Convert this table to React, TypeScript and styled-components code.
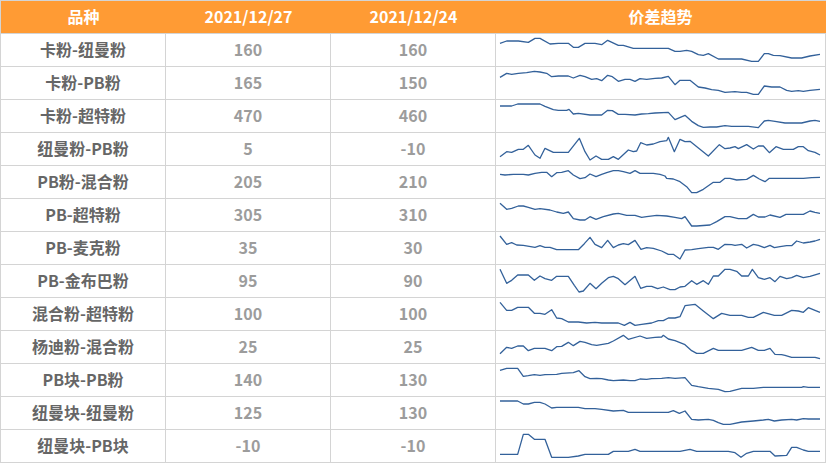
import React from 'react'
import styled, { createGlobalStyle } from 'styled-components'

const GlobalStyle = createGlobalStyle`
  html, body {
    margin: 0;
    padding: 0;
    background: #ffffff;
  }
  body {
    font-family: "Noto Sans CJK SC", "Noto Sans", sans-serif;
  }
`

// sparkline points were read off a 3x blow-up, so coords are in 1/3 px
// oy is the row line offset inside that blow-up
interface SparkData {
  oy: number
  ox?: number
  pts: number[]
}

interface Row {
  name: string
  cur: string
  prev: string
  trend: SparkData
}

const rows: Row[] = [
  {
    name: '卡粉-纽曼粉',
    cur: '160',
    prev: '160',
    trend: {
      oy: 0,
      pts: [
        15, 31, 35, 24, 70, 24, 100, 28, 120, 16, 135, 16, 165, 33, 190, 31, 220, 31, 235, 43, 250, 43, 270, 31, 300,
        31, 320, 35, 338, 22, 370, 37, 385, 37, 415, 46, 520, 46, 540, 55, 555, 55, 575, 52, 590, 55, 610, 65, 625, 67,
        640, 62, 670, 78, 740, 78, 770, 85, 790, 85, 808, 62, 820, 62, 835, 67, 855, 68, 890, 75, 920, 75, 945, 69, 975,
        64,
      ],
    },
  },
  {
    name: '卡粉-PB粉',
    cur: '165',
    prev: '150',
    trend: {
      oy: 99,
      pts: [
        15, 133, 35, 121, 50, 124, 70, 121, 95, 119, 118, 115, 135, 117, 155, 121, 170, 131, 190, 129, 220, 129, 235,
        135, 255, 127, 270, 131, 290, 139, 305, 137, 320, 143, 338, 127, 352, 131, 370, 145, 390, 139, 405, 139, 420,
        145, 435, 137, 455, 139, 480, 136, 500, 135, 520, 130, 540, 155, 555, 142, 585, 142, 610, 162, 630, 165, 650,
        170, 670, 172, 690, 178, 720, 176, 740, 178, 755, 178, 775, 184, 790, 184, 808, 159, 830, 162, 855, 162, 875,
        172, 890, 175, 910, 173, 925, 175, 945, 172, 975, 169,
      ],
    },
  },
  {
    name: '卡粉-超特粉',
    cur: '470',
    prev: '460',
    trend: {
      oy: 198,
      pts: [
        15, 219, 50, 219, 68, 213, 135, 213, 150, 220, 175, 230, 190, 232, 215, 232, 222, 229, 235, 243, 250, 241, 285,
        246, 320, 246, 338, 232, 352, 233, 370, 244, 390, 244, 420, 246, 440, 243, 460, 242, 480, 240, 520, 238, 540,
        260, 570, 247, 590, 265, 610, 278, 625, 283, 645, 282, 665, 282, 690, 278, 710, 280, 760, 280, 790, 284, 808,
        264, 820, 262, 840, 265, 870, 270, 920, 270, 945, 264, 960, 262, 975, 265,
      ],
    },
  },
  {
    name: '纽曼粉-PB粉',
    cur: '5',
    prev: '-10',
    trend: {
      oy: 36,
      ox: 15,
      pts: [
        30, 110, 50, 95, 65, 97, 85, 88, 100, 88, 115, 76, 135, 105, 150, 115, 165, 85, 190, 97, 235, 97, 268, 55, 285,
        95, 300, 120, 318, 108, 335, 118, 355, 118, 370, 110, 385, 118, 415, 90, 430, 95, 440, 93, 452, 68, 470, 75,
        490, 72, 510, 65, 530, 62, 535, 52, 553, 95, 570, 58, 585, 65, 600, 64, 655, 108, 688, 74, 705, 86, 720, 84,
        735, 80, 745, 86, 770, 74, 790, 87, 805, 78, 820, 78, 838, 98, 858, 80, 880, 88, 910, 88, 925, 80, 940, 80, 955,
        92, 975, 97, 990, 105,
      ],
    },
  },
  {
    name: 'PB粉-混合粉',
    cur: '205',
    prev: '210',
    trend: {
      oy: 135,
      ox: 15,
      pts: [
        30, 163, 45, 165, 70, 163, 100, 163, 115, 165, 135, 160, 155, 157, 170, 157, 185, 170, 200, 158, 215, 157, 235,
        152, 250, 165, 270, 176, 285, 173, 300, 162, 318, 170, 335, 163, 350, 158, 370, 152, 385, 152, 400, 155, 420,
        160, 435, 152, 450, 160, 490, 160, 510, 163, 525, 168, 530, 175, 550, 177, 570, 185, 590, 200, 605, 218, 620,
        218, 640, 208, 670, 187, 690, 187, 705, 175, 720, 175, 740, 180, 770, 178, 790, 166, 808, 177, 825, 185, 838,
        175, 880, 175, 910, 175, 940, 175, 965, 173, 990, 172,
      ],
    },
  },
  {
    name: 'PB-超特粉',
    cur: '305',
    prev: '310',
    trend: {
      oy: 234,
      ox: 15,
      pts: [
        30, 250, 50, 268, 65, 265, 85, 258, 100, 258, 115, 262, 135, 268, 150, 266, 180, 270, 200, 276, 220, 280, 235,
        276, 250, 296, 270, 300, 285, 300, 300, 290, 318, 298, 340, 290, 370, 282, 385, 280, 410, 286, 435, 286, 455,
        292, 470, 290, 500, 286, 530, 288, 555, 292, 575, 296, 585, 290, 605, 318, 620, 318, 660, 315, 680, 305, 705,
        290, 720, 290, 745, 296, 770, 296, 790, 283, 805, 291, 825, 291, 840, 285, 870, 292, 888, 283, 940, 283, 960,
        273, 975, 277, 990, 280,
      ],
    },
  },
  {
    name: 'PB-麦克粉',
    cur: '35',
    prev: '30',
    trend: {
      oy: 0,
      pts: [
        15, 15, 35, 40, 50, 35, 65, 42, 85, 43, 120, 49, 135, 44, 150, 49, 165, 49, 185, 56, 250, 56, 268, 38, 285, 19,
        300, 40, 320, 50, 338, 28, 355, 50, 370, 42, 385, 38, 400, 41, 420, 28, 438, 55, 455, 50, 475, 52, 500, 60, 520,
        70, 535, 70, 555, 84, 570, 57, 590, 56, 610, 53, 640, 49, 655, 49, 670, 55, 690, 40, 710, 41, 720, 43, 740, 40,
        755, 51, 775, 40, 790, 43, 808, 50, 825, 43, 838, 50, 855, 47, 875, 44, 890, 44, 905, 30, 925, 36, 945, 33, 960,
        30, 975, 25,
      ],
    },
  },
  {
    name: 'PB-金布巴粉',
    cur: '95',
    prev: '90',
    trend: {
      oy: 99,
      pts: [
        15, 115, 35, 157, 50, 148, 68, 132, 100, 132, 118, 148, 135, 135, 150, 143, 170, 148, 185, 136, 220, 136, 238,
        163, 252, 183, 265, 180, 285, 157, 303, 173, 320, 157, 340, 140, 355, 136, 370, 143, 390, 161, 420, 136, 437,
        172, 455, 166, 470, 166, 488, 173, 505, 168, 525, 176, 540, 176, 555, 168, 570, 166, 590, 149, 605, 160, 625,
        149, 640, 160, 655, 135, 670, 135, 690, 115, 705, 115, 725, 121, 740, 135, 760, 135, 772, 115, 790, 140, 808,
        145, 825, 140, 840, 152, 855, 136, 875, 143, 890, 140, 905, 133, 925, 140, 945, 136, 975, 127,
      ],
    },
  },
  {
    name: '混合粉-超特粉',
    cur: '100',
    prev: '100',
    trend: {
      oy: 198,
      pts: [
        15, 214, 35, 238, 50, 238, 68, 229, 100, 229, 118, 247, 135, 247, 150, 250, 170, 236, 185, 261, 200, 263, 220,
        273, 250, 273, 275, 276, 300, 274, 320, 276, 370, 276, 388, 283, 405, 274, 420, 283, 440, 280, 470, 276, 490,
        269, 505, 269, 520, 261, 540, 261, 555, 257, 570, 224, 600, 220, 625, 240, 655, 263, 680, 247, 705, 253, 740,
        253, 760, 259, 775, 259, 805, 244, 838, 253, 860, 253, 890, 238, 910, 240, 925, 244, 940, 230, 960, 238, 975,
        244,
      ],
    },
  },
  {
    name: '杨迪粉-混合粉',
    cur: '25',
    prev: '25',
    trend: {
      oy: 0,
      pts: [
        15, 71, 35, 52, 50, 55, 68, 48, 85, 48, 100, 62, 118, 55, 150, 55, 170, 62, 185, 50, 200, 49, 220, 37, 235, 47,
        255, 34, 270, 37, 290, 44, 305, 46, 340, 40, 355, 33, 385, 16, 400, 28, 435, 18, 455, 25, 480, 22, 500, 21, 505,
        16, 520, 27, 540, 32, 555, 38, 570, 44, 590, 62, 605, 70, 625, 70, 655, 55, 670, 61, 740, 61, 770, 52, 790, 61,
        808, 61, 825, 55, 840, 73, 860, 74, 870, 76, 890, 82, 940, 82, 960, 82, 975, 86,
      ],
    },
  },
  {
    name: 'PB块-PB粉',
    cur: '140',
    prev: '130',
    trend: {
      oy: 99,
      pts: [
        15, 121, 35, 115, 68, 115, 85, 139, 100, 137, 118, 134, 135, 136, 150, 134, 185, 133, 200, 130, 235, 128, 252,
        122, 270, 140, 285, 146, 305, 145, 320, 146, 340, 150, 355, 152, 385, 150, 405, 152, 420, 152, 435, 147, 455,
        148, 470, 146, 500, 145, 520, 143, 540, 145, 570, 143, 590, 166, 610, 170, 640, 175, 670, 178, 690, 185, 705,
        184, 740, 175, 775, 175, 805, 172, 840, 172, 920, 172, 925, 170, 940, 172, 975, 172,
      ],
    },
  },
  {
    name: '纽曼块-纽曼粉',
    cur: '125',
    prev: '130',
    trend: {
      oy: 198,
      pts: [
        15, 213, 68, 213, 85, 222, 100, 222, 118, 217, 135, 217, 150, 222, 170, 234, 185, 232, 250, 232, 270, 236, 300,
        236, 320, 238, 355, 243, 385, 241, 400, 247, 440, 247, 520, 247, 535, 242, 553, 250, 570, 243, 590, 268, 610,
        270, 640, 268, 655, 271, 670, 278, 685, 283, 705, 283, 740, 276, 775, 273, 805, 270, 820, 268, 838, 273, 860,
        270, 890, 268, 905, 270, 925, 266, 940, 267, 975, 267,
      ],
    },
  },
  {
    name: '纽曼块-PB块',
    cur: '-10',
    prev: '-10',
    trend: {
      oy: 297,
      pts: [
        15, 373, 68, 373, 85, 313, 100, 313, 118, 328, 150, 328, 170, 382, 220, 382, 250, 378, 270, 373, 340, 373, 355,
        364, 400, 364, 420, 358, 435, 364, 555, 364, 585, 358, 605, 364, 700, 364, 720, 368, 738, 382, 755, 370, 775,
        364, 825, 364, 840, 378, 875, 376, 890, 352, 905, 352, 925, 360, 940, 364, 975, 364,
      ],
    },
  },
]

const toPolyline = ({ pts, oy, ox = 0 }: SparkData) => {
  const out: string[] = []
  for (let i = 0; i < pts.length; i += 2) {
    out.push(`${pts[i] - ox},${pts[i + 1] - oy}`)
  }
  return out.join(' ')
}

const Sparkline = ({ data }: { data: SparkData }) => (
  <TrendSvg viewBox='3 3 987 96' preserveAspectRatio='none'>
    <polyline
      points={toPolyline(data)}
      fill='none'
      stroke='#33619a'
      strokeWidth={1.3}
      strokeLinejoin='round'
      vectorEffect='non-scaling-stroke'
    />
  </TrendSvg>
)

export default function App() {
  return (
    <>
      <GlobalStyle />
      <Table>
        <Header>
          <HeadCell>品种</HeadCell>
          <HeadCell>2021/12/27</HeadCell>
          <HeadCell>2021/12/24</HeadCell>
          <HeadCell>价差趋势</HeadCell>
        </Header>
        {rows.map((row) => (
          <React.Fragment key={row.name}>
            <NameCell>{row.name}</NameCell>
            <ValueCell>{row.cur}</ValueCell>
            <ValueCell>{row.prev}</ValueCell>
            <TrendCell>
              <Sparkline data={row.trend} />
            </TrendCell>
          </React.Fragment>
        ))}
      </Table>
    </>
  )
}

const Table = styled.div`
  display: grid;
  grid-template-columns: 164px 164px 164px 329px;
  grid-auto-rows: 32px;
  gap: 1px;
  padding: 1px;
  width: 826px;
  box-sizing: border-box;
  background-color: #d4d4d4;
`

const Header = styled.div`
  grid-column: 1 / -1;
  display: grid;
  grid-template-columns: 165px 165px 165px 329px;
  margin: 0 -1px 0 0;
  background-color: #ff9b34;
`

const HeadCell = styled.div`
  display: flex;
  align-items: center;
  justify-content: center;
  padding-bottom: 2px;
  color: #ffffff;
  font-size: 16px;
  font-weight: 700;
`

const Cell = styled.div`
  display: flex;
  align-items: center;
  justify-content: center;
  padding-bottom: 2px;
  background-color: #ffffff;
  font-size: 16px;
  font-weight: 700;
`

const NameCell = styled(Cell)`
  color: #666666;
`

const ValueCell = styled(Cell)`
  color: #9c9c9c;
`

const TrendCell = styled.div`
  background-color: #ffffff;
`

const TrendSvg = styled.svg`
  display: block;
  width: 329px;
  height: 32px;
`
